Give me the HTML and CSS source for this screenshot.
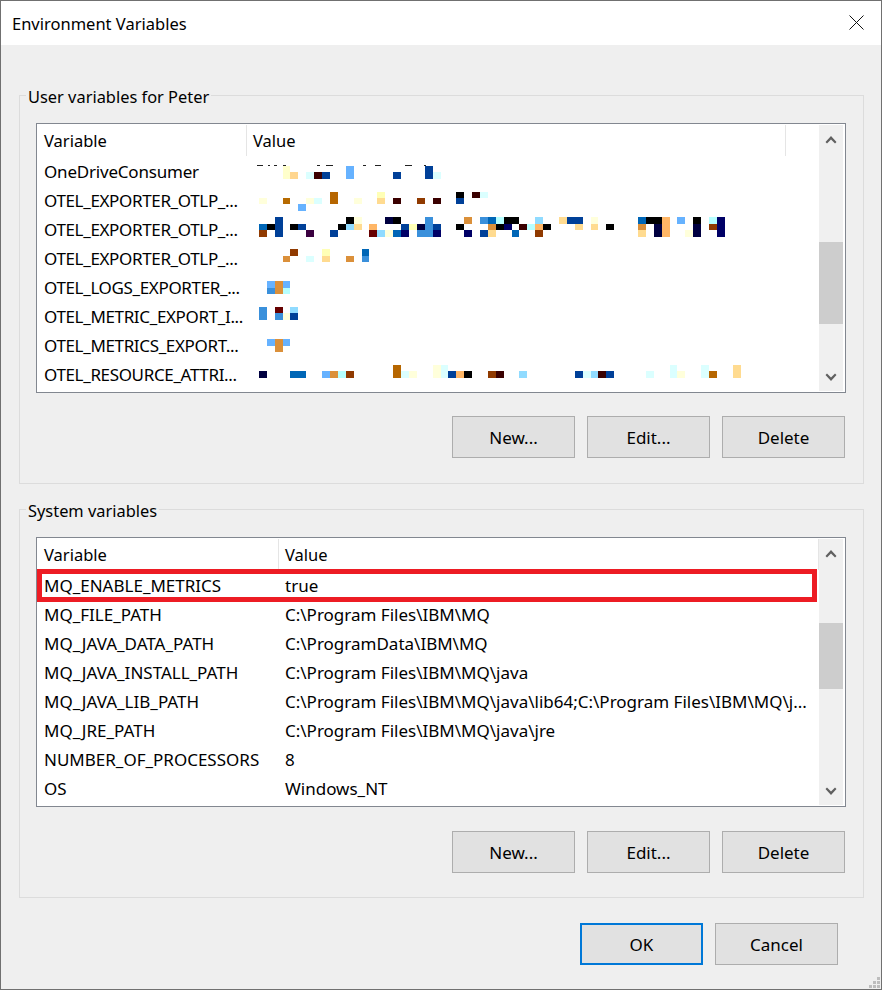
FILE: index.html
```html
<!DOCTYPE html>
<html lang="en">
<head>
<meta charset="utf-8">
<title>Environment Variables</title>
<link rel="stylesheet" href="styles.css">
</head>
<body>
<div class="window">
  <header class="titlebar">
    <span class="title">Environment Variables</span>
    <svg class="close" width="15" height="15" viewBox="0 0 15 15"><path d="M.5.5l14 14M14.500.5l-14 14" stroke="#111" stroke-width="1" fill="none"/></svg>
  </header>
  <main class="content">
    <section class="group">
      <h2 class="legend">User variables for Peter</h2>
      <div class="list list-user">
        <div class="table">
          <div class="thead"><div class="th th-var">Variable</div><div class="th th-val">Value</div></div>
          <div class="row"><div class="var var-soft">OneDriveConsumer</div><svg class="mosaic" width="572" height="29" viewBox="247 158 572 29">
            <g fill="#222"><rect x="257" y="165" width="6" height="1"/><rect x="268" y="165" width="2" height="1"/><rect x="274" y="165" width="3" height="1"/><rect x="283" y="165" width="3" height="1"/><rect x="317" y="165" width="3" height="1"/><rect x="326" y="165" width="7" height="1"/><rect x="363" y="165" width="3" height="1"/><rect x="375" y="165" width="6" height="1"/><rect x="405" y="165" width="7" height="1"/><rect x="424" y="165" width="2" height="1"/></g>
            <rect x="283" y="166" width="7" height="13" fill="#FFFFCC"/><rect x="290" y="172" width="8" height="7" fill="#FFD68F"/><rect x="306" y="172" width="8" height="7" fill="#DBFFFF"/><rect x="314" y="172" width="8" height="7" fill="#3A0000"/><rect x="322" y="172" width="8" height="7" fill="#004098"/><rect x="346" y="166" width="8" height="13" fill="#66B2FF"/><rect x="393" y="172" width="8" height="7" fill="#004098"/><rect x="425" y="166" width="8" height="13" fill="#004098"/><rect x="433" y="172" width="8" height="7" fill="#DBFFFF"/>
          </svg></div>
          <div class="row"><div class="var var-clip">OTEL_EXPORTER_OTLP_...</div><svg class="mosaic" width="572" height="29" viewBox="247 187 572 29">
            <rect x="259" y="198" width="8" height="6" fill="#FFFFDB"/><rect x="283" y="198" width="7" height="6" fill="#B66A00"/><rect x="298" y="204" width="8" height="7" fill="#66B2FF"/><rect x="306" y="198" width="8" height="6" fill="#FFFFDB"/><rect x="314" y="198" width="8" height="6" fill="#DBFFFF"/><rect x="330" y="192" width="8" height="12" fill="#B66600"/><rect x="354" y="198" width="8" height="6" fill="#FFFFDB"/><rect x="377" y="192" width="8" height="6" fill="#FFFFB6"/><rect x="377" y="198" width="8" height="6" fill="#FFDB90"/><rect x="393" y="198" width="8" height="6" fill="#3A0000"/><rect x="417" y="198" width="8" height="6" fill="#903A00"/><rect x="433" y="198" width="8" height="6" fill="#3A0000"/><rect x="456" y="192" width="8" height="6" fill="#000"/><rect x="456" y="198" width="8" height="6" fill="#004098"/><rect x="472" y="192" width="8" height="6" fill="#3A0000"/><rect x="480" y="192" width="8" height="6" fill="#DBFFFF"/>
          </svg></div>
          <div class="row"><div class="var var-clip">OTEL_EXPORTER_OTLP_...</div><svg class="mosaic" width="572" height="29" viewBox="247 216 572 29">
            <rect x="259" y="224" width="8" height="6" fill="#0066B6"/><rect x="267" y="224" width="8" height="6" fill="#000"/><rect x="275" y="217" width="8" height="20" fill="#004098"/><rect x="259" y="230" width="8" height="7" fill="#903A00"/><rect x="290" y="224" width="8" height="6" fill="#000"/><rect x="298" y="224" width="8" height="6" fill="#004098"/><rect x="306" y="230" width="8" height="7" fill="#3A0040"/><rect x="330" y="230" width="8" height="7" fill="#004098"/><rect x="338" y="224" width="8" height="6" fill="#000"/><rect x="346" y="217" width="8" height="7" fill="#000"/><rect x="346" y="224" width="8" height="6" fill="#90DBFF"/><rect x="354" y="217" width="8" height="7" fill="#FFFFDB"/><rect x="354" y="224" width="8" height="6" fill="#FFDB90"/><rect x="369" y="224" width="8" height="6" fill="#FFB666"/><rect x="369" y="230" width="8" height="7" fill="#660000"/><rect x="377" y="230" width="8" height="7" fill="#90DBFF"/><rect x="385" y="217" width="8" height="7" fill="#000040"/><rect x="393" y="217" width="8" height="7" fill="#000"/><rect x="385" y="230" width="8" height="7" fill="#FFFFDB"/><rect x="393" y="230" width="8" height="7" fill="#0066B6"/><rect x="401" y="224" width="8" height="6" fill="#004098"/><rect x="401" y="230" width="8" height="7" fill="#000066"/><rect x="409" y="224" width="8" height="6" fill="#FFFFB6"/><rect x="417" y="224" width="8" height="6" fill="#000040"/><rect x="417" y="230" width="8" height="7" fill="#3A90DB"/><rect x="425" y="217" width="8" height="20" fill="#3A90DB"/><rect x="433" y="224" width="8" height="6" fill="#004098"/><rect x="433" y="230" width="8" height="7" fill="#000066"/>
            <rect x="464" y="217" width="8" height="7" fill="#DB903A"/><rect x="456" y="224" width="8" height="6" fill="#000"/><rect x="464" y="230" width="8" height="7" fill="#000066"/><rect x="480" y="217" width="8" height="7" fill="#3A90DB"/><rect x="488" y="217" width="8" height="7" fill="#0066B6"/><rect x="496" y="217" width="8" height="7" fill="#B6FFFF"/><rect x="504" y="217" width="15" height="7" fill="#000"/><rect x="488" y="224" width="8" height="6" fill="#DB903A"/><rect x="496" y="224" width="8" height="6" fill="#000"/><rect x="504" y="224" width="8" height="6" fill="#000066"/><rect x="480" y="230" width="8" height="7" fill="#004098"/><rect x="488" y="230" width="8" height="7" fill="#FFDB90"/><rect x="512" y="230" width="7" height="7" fill="#0066B6"/><rect x="519" y="224" width="8" height="6" fill="#3A0000"/><rect x="527" y="224" width="8" height="6" fill="#B6FFFF"/><rect x="535" y="217" width="8" height="7" fill="#90DBFF"/><rect x="535" y="224" width="8" height="6" fill="#FFB666"/><rect x="543" y="224" width="8" height="6" fill="#000"/><rect x="535" y="230" width="8" height="7" fill="#903A00"/><rect x="559" y="217" width="8" height="7" fill="#FFDB90"/><rect x="567" y="217" width="16" height="7" fill="#004098"/><rect x="575" y="224" width="8" height="6" fill="#FFDB90"/><rect x="591" y="217" width="7" height="7" fill="#FFFFDB"/><rect x="591" y="224" width="7" height="6" fill="#FFDB90"/><rect x="606" y="224" width="8" height="6" fill="#000"/><rect x="638" y="217" width="8" height="7" fill="#0066B6"/><rect x="646" y="217" width="16" height="7" fill="#000"/><rect x="638" y="224" width="8" height="6" fill="#DB903A"/><rect x="638" y="230" width="8" height="7" fill="#FFDB90"/><rect x="654" y="224" width="8" height="13" fill="#000040"/><rect x="662" y="217" width="8" height="20" fill="#FFB666"/><rect x="677" y="217" width="8" height="7" fill="#66B2FF"/><rect x="685" y="230" width="8" height="7" fill="#FFFFDB"/><rect x="693" y="217" width="8" height="7" fill="#000"/><rect x="693" y="224" width="8" height="13" fill="#000040"/><rect x="709" y="217" width="8" height="7" fill="#B6FFFF"/><rect x="709" y="224" width="8" height="6" fill="#903A00"/><rect x="717" y="217" width="8" height="20" fill="#000066"/>
          </svg></div>
          <div class="row"><div class="var var-clip">OTEL_EXPORTER_OTLP_...</div><svg class="mosaic" width="572" height="29" viewBox="247 245 572 29">
            <rect x="283" y="256" width="7" height="6" fill="#DB903A"/><rect x="290" y="249" width="8" height="7" fill="#903A00"/><rect x="306" y="256" width="8" height="6" fill="#DBFFFF"/><rect x="322" y="249" width="8" height="7" fill="#FFFFB6"/><rect x="322" y="256" width="8" height="6" fill="#FFDB90"/><rect x="346" y="256" width="8" height="6" fill="#DB903A"/><rect x="362" y="249" width="7" height="7" fill="#0066B6"/><rect x="362" y="256" width="7" height="6" fill="#3A90DB"/>
          </svg></div>
          <div class="row"><div class="var var-clip">OTEL_LOGS_EXPORTER_...</div><svg class="mosaic" width="572" height="29" viewBox="247 274 572 29">
            <rect x="267" y="281" width="8" height="7" fill="#66B2FF"/><rect x="267" y="288" width="8" height="6" fill="#3A90DB"/><rect x="275" y="281" width="8" height="13" fill="#DB903A"/><rect x="283" y="281" width="7" height="7" fill="#66B2FF"/><rect x="283" y="288" width="7" height="6" fill="#B6FFFF"/>
          </svg></div>
          <div class="row"><div class="var var-clip">OTEL_METRIC_EXPORT_I...</div><svg class="mosaic" width="572" height="29" viewBox="247 303 572 29">
            <rect x="259" y="307" width="8" height="13" fill="#3A90DB"/><rect x="275" y="307" width="8" height="6" fill="#660000"/><rect x="275" y="313" width="8" height="7" fill="#3A90DB"/><rect x="283" y="313" width="7" height="7" fill="#FFFFDB"/><rect x="290" y="307" width="8" height="6" fill="#90DBFF"/><rect x="290" y="313" width="8" height="7" fill="#004098"/>
          </svg></div>
          <div class="row"><div class="var var-clip">OTEL_METRICS_EXPORT...</div><svg class="mosaic" width="572" height="29" viewBox="247 332 572 29">
            <rect x="267" y="339" width="8" height="7" fill="#66B2FF"/><rect x="275" y="339" width="8" height="13" fill="#DB903A"/><rect x="283" y="339" width="7" height="7" fill="#66B2FF"/>
          </svg></div>
          <div class="row"><div class="var var-clip">OTEL_RESOURCE_ATTRI...</div><svg class="mosaic" width="572" height="29" viewBox="247 361 572 29">
            <rect x="259" y="371" width="8" height="7" fill="#000040"/><rect x="290" y="371" width="16" height="7" fill="#0066B6"/><rect x="322" y="371" width="8" height="7" fill="#66B2FF"/><rect x="330" y="371" width="8" height="7" fill="#DB903A"/><rect x="338" y="371" width="8" height="7" fill="#B6FFFF"/><rect x="346" y="371" width="8" height="7" fill="#903A00"/><rect x="393" y="365" width="8" height="13" fill="#B66600"/><rect x="401" y="371" width="8" height="7" fill="#DBFFFF"/><rect x="409" y="371" width="8" height="7" fill="#FFFFDB"/><rect x="433" y="365" width="8" height="13" fill="#FFFFDB"/><rect x="441" y="365" width="7" height="13" fill="#DBFFFF"/><rect x="448" y="371" width="8" height="7" fill="#004098"/><rect x="456" y="371" width="8" height="7" fill="#FFB666"/><rect x="464" y="371" width="8" height="7" fill="#000"/><rect x="488" y="371" width="8" height="7" fill="#903A00"/><rect x="496" y="371" width="8" height="7" fill="#3A0000"/><rect x="519" y="371" width="8" height="7" fill="#90DBFF"/><rect x="575" y="371" width="8" height="7" fill="#004098"/><rect x="583" y="371" width="8" height="7" fill="#DBFFFF"/><rect x="591" y="371" width="7" height="7" fill="#90DBFF"/><rect x="598" y="371" width="8" height="7" fill="#3A0000"/><rect x="606" y="371" width="8" height="7" fill="#004098"/><rect x="646" y="371" width="8" height="7" fill="#DBFFFF"/><rect x="670" y="365" width="7" height="13" fill="#DBFFFF"/><rect x="677" y="371" width="8" height="7" fill="#FFFFDB"/><rect x="701" y="365" width="8" height="13" fill="#DBFFFF"/><rect x="709" y="371" width="8" height="7" fill="#B66600"/><rect x="733" y="365" width="8" height="13" fill="#FFDB90"/>
          </svg></div>
        </div>
        <div class="scrollbar">
          <svg class="chevron" width="12" height="10" viewBox="0 0 12 10"><path d="M6 1l5.500 6-1.500 1.500L6 4.500 2 8.500.5 7z" fill="#606060"/></svg>
          <div class="track"><div class="thumb thumb-user"></div></div>
          <svg class="chevron" width="12" height="10" viewBox="0 0 12 10"><path d="M6 9L.5 3 2 1.500l4 4 4-4L11.500 3z" fill="#606060"/></svg>
        </div>
      </div>
      <div class="actions">
        <button class="btn" type="button">New...</button>
        <button class="btn" type="button">Edit...</button>
        <button class="btn" type="button">Delete</button>
      </div>
    </section>

    <section class="group">
      <h2 class="legend">System variables</h2>
      <div class="list list-system">
        <div class="table">
          <div class="thead"><div class="th th-var">Variable</div><div class="th th-val">Value</div></div>
          <div class="row row-marked"><div class="var">MQ_ENABLE_METRICS</div><div class="val">true</div></div>
          <div class="row"><div class="var">MQ_FILE_PATH</div><div class="val">C:\Program Files\IBM\MQ</div></div>
          <div class="row"><div class="var">MQ_JAVA_DATA_PATH</div><div class="val">C:\ProgramData\IBM\MQ</div></div>
          <div class="row"><div class="var">MQ_JAVA_INSTALL_PATH</div><div class="val">C:\Program Files\IBM\MQ\java</div></div>
          <div class="row"><div class="var">MQ_JAVA_LIB_PATH</div><div class="val">C:\Program Files\IBM\MQ\java\lib64;C:\Program Files\IBM\MQ\j...</div></div>
          <div class="row"><div class="var">MQ_JRE_PATH</div><div class="val">C:\Program Files\IBM\MQ\java\jre</div></div>
          <div class="row"><div class="var">NUMBER_OF_PROCESSORS</div><div class="val">8</div></div>
          <div class="row"><div class="var">OS</div><div class="val">Windows_NT</div></div>
        </div>
        <div class="scrollbar">
          <svg class="chevron" width="12" height="10" viewBox="0 0 12 10"><path d="M6 1l5.500 6-1.500 1.500L6 4.500 2 8.500.5 7z" fill="#606060"/></svg>
          <div class="track"><div class="thumb thumb-system"></div></div>
          <svg class="chevron" width="12" height="10" viewBox="0 0 12 10"><path d="M6 9L.5 3 2 1.500l4 4 4-4L11.500 3z" fill="#606060"/></svg>
        </div>
      </div>
      <div class="actions actions-system">
        <button class="btn" type="button">New...</button>
        <button class="btn" type="button">Edit...</button>
        <button class="btn" type="button">Delete</button>
      </div>
    </section>

    <footer class="footer">
      <button class="btn btn-default" type="button">OK</button>
      <button class="btn" type="button">Cancel</button>
    </footer>
  </main>
  <svg class="grip" width="11" height="11" viewBox="0 0 11 11"><path d="M8 0h3v3H8zM4 4h3v3H4zM8 4h3v3H8zM0 8h3v3H0zM4 8h3v3H4zM8 8h3v3H8z" fill="#BDBDBD"/></svg>
</div>
</body>
</html>
```

FILE: styles.css
```css
* { box-sizing: border-box; }
html, body { margin: 0; padding: 0; }
body {
  font-family: "Noto Sans", "Open Sans", sans-serif;
  font-size: 17px;
  color: #000;
  background: #efefef;
}
.window {
  position: relative;
  width: 882px;
  height: 990px;
  border: 1px solid #707070;
  background: #efefef;
  overflow: hidden;
}
.titlebar {
  height: 44px;
  background: #fff;
  display: flex;
  align-items: center;
  justify-content: space-between;
  padding: 0 17px 0 11px;
}
.title { font-size: 16.5px; }
.close { display: block; margin-top: -1px; }
.content { padding: 50px 17px 0 18px; }
.group {
  position: relative;
  height: 389px;
  border: 1px solid #dcdcdc;
  padding: 27px 17px 0 16px;
  margin-bottom: 25px;
}
.legend {
  position: absolute;
  top: -10px;
  left: 6px;
  margin: 0;
  padding: 0 2px;
  font: inherit;
  font-size: 16.4px;
  line-height: 22px;
  background: #efefef;
}
.list {
  display: flex;
  height: 270px;
  border: 1px solid #828790;
  background: #fff;
  padding-right: 2px;
}
.list-user { --col: 210px; --val: 539px; }
.list-system { --col: 242px; --val: 540px; }
.table { width: 782px; flex: none; }
.thead { display: flex; height: 34px; padding-top: 1px; }
.th {
  height: 31px;
  font-size: 16.5px;
  line-height: 32px;
  border-right: 1px solid #e5e5e5;
}
.th-var { width: var(--col); padding-left: 7px; }
.th-val { width: var(--val); padding-left: 6px; }
.row {
  position: relative;
  display: flex;
  height: 29px;
  line-height: 27px;
  white-space: nowrap;
}
.var { width: var(--col); flex: none; padding-left: 7px; }
.var-clip { letter-spacing: -0.35px; }
.var-soft { letter-spacing: -0.2px; }
.val { padding-left: 6px; }
.mosaic { display: block; flex: none; shape-rendering: crispEdges; }
.row-marked::after {
  content: "";
  position: absolute;
  top: -3px;
  bottom: -1px;
  left: 0;
  right: 2px;
  border: 5px solid #ed1c24;
  pointer-events: none;
}
.scrollbar {
  width: 24px;
  flex: none;
  margin: 1px 0;
  background: #f0f0f0;
  display: flex;
  flex-direction: column;
  align-items: center;
}
.chevron { display: block; flex: none; margin: 10px 0 8px; }
.scrollbar .chevron:last-child { margin: 8px 0 9px; }
.track { flex: 1; width: 100%; }
.thumb { background: #cdcdcd; width: 100%; }
.thumb-user { height: 82px; margin-top: 89px; }
.thumb-system { height: 66px; margin-top: 56px; }
.actions {
  display: flex;
  justify-content: flex-end;
  gap: 12px;
  margin-top: 23px;
  padding-right: 1px;
}
.actions-system { margin-top: 24px; }
.btn {
  width: 123px;
  height: 42px;
  padding: 0;
  background: #e1e1e1;
  border: 1px solid #adadad;
  font: inherit;
  color: #000;
}
.btn-default { border: 2px solid #0078d7; }
.footer {
  display: flex;
  justify-content: flex-end;
  gap: 12px;
  margin-top: 1px;
  padding-right: 26px;
}
.grip { position: absolute; right: 1px; bottom: 1px; display: block; }
```
